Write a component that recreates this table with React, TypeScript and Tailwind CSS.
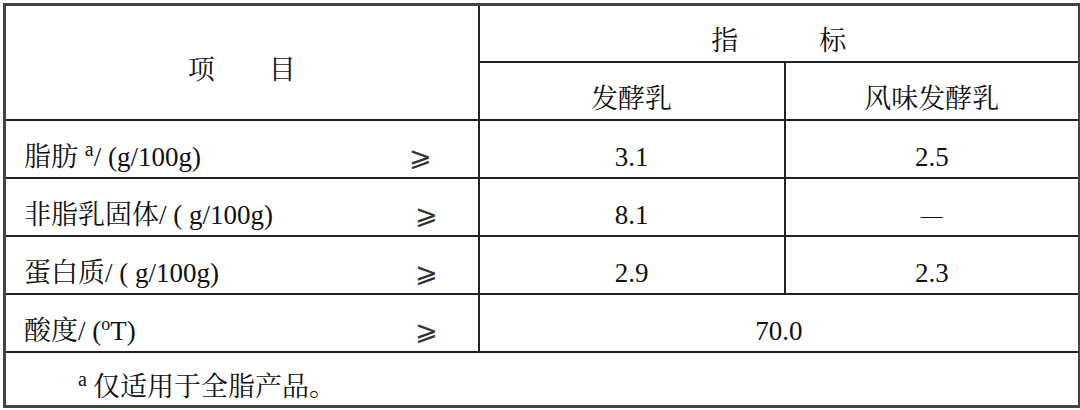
const rows = [
  { label: <>脂肪 <sup className="relative -top-[10px] align-baseline text-[20px]">a</sup>/ (g/100g)</>, ge: 'mr-[46px]', a: '3.1', b: '2.5' },
  { label: <>非脂乳固体/ ( g/100g)</>, ge: 'mr-[40px]', a: '8.1', b: '—' },
  { label: <>蛋白质/ ( g/100g)</>, ge: 'mr-[40px]', a: '2.9', b: '2.3' },
]

const cell = 'border-2 border-[#222] pt-4 leading-[30px]'
const geFont = "font-['DejaVu_Sans',sans-serif] text-[27px] text-[#333]"

export default function App() {
  return (
    <div className="h-[410px] w-[1080px] bg-white pl-[3px] pt-[3px] font-['Liberation_Serif','Noto_Serif_CJK_SC','Noto_Sans_CJK_SC',serif] text-[27px] text-[#111]">
      <table className="w-[1075px] table-fixed border-collapse border-[3px] border-[#444]">
        <colgroup>
          <col className="w-[474px]" />
          <col className="w-[306px]" />
          <col className="w-[295px]" />
        </colgroup>
        <tbody>
          <tr className="h-[57px]">
            <td rowSpan={2} className={`${cell} text-center whitespace-pre`}>
              项　　目
            </td>
            <td colSpan={2} className={`${cell} text-center whitespace-pre`}>
              指　　　标
            </td>
          </tr>
          <tr className="h-[58px]">
            <td className={`${cell} text-center`}>发酵乳</td>
            <td className={`${cell} text-center`}>风味发酵乳</td>
          </tr>
          {rows.map((r, i) => (
            <tr key={i} className="h-[58px]">
              <td className={`${cell} pl-[18px]`}>
                <div className="flex items-center">
                  <span>{r.label}</span>
                  <span className={`ml-auto ${r.ge} ${geFont}`}>⩾</span>
                </div>
              </td>
              <td className={`${cell} text-center`}>{r.a}</td>
              <td className={`${cell} text-center`}>
                {r.b === '—' ? <span className="text-[22px]">—</span> : r.b}
              </td>
            </tr>
          ))}
          <tr className="h-[58px]">
            <td className={`${cell} pl-[18px]`}>
              <div className="flex items-center">
                <span>
                  酸度/ (<sup className="relative -top-[10px] align-baseline text-[18px]">o</sup>T)
                </span>
                <span className={`ml-auto mr-[40px] ${geFont}`}>⩾</span>
              </div>
            </td>
            <td colSpan={2} className={`${cell} text-center`}>70.0</td>
          </tr>
          <tr className="h-[55px]">
            <td colSpan={3} className={`${cell} pl-[72px]`}>
              <sup className="relative -top-[10px] mr-[6px] align-baseline text-[20px]">a</sup>仅适用于全脂产品。
            </td>
          </tr>
        </tbody>
      </table>
    </div>
  )
}
